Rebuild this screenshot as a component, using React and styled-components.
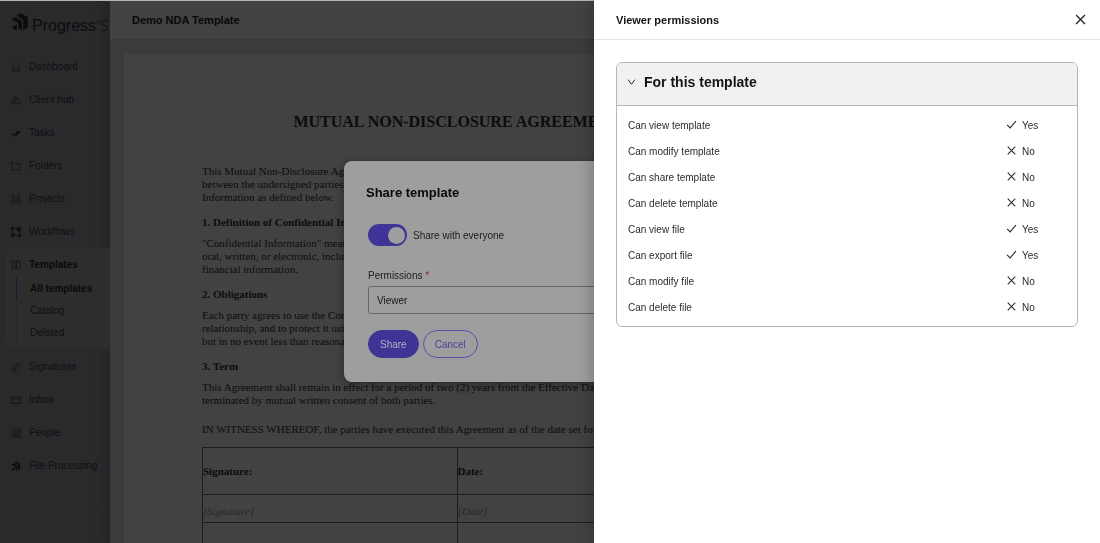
import { useState } from "react";
import styled, { createGlobalStyle } from "styled-components";

const GlobalStyle = createGlobalStyle`
  * {
    box-sizing: border-box;
  }
  body {
    margin: 0;
    overflow: hidden;
    font-family: "Liberation Sans", Arial, sans-serif;
    font-size: 10px;
    line-height: 14px;
    color: #2c2c2c;
  }
  h1, h2, h3, p, ul {
    margin: 0;
    padding: 0;
  }
  button, select, input {
    font-family: inherit;
  }
`;

const Page = styled.div`
  display: flex;
  height: 100vh;
  border-top: 1px solid #b4b8b7;
  background: #424242;
`;
const Sidebar = styled.nav`
  flex: 0 0 110px;
  overflow: hidden;
  background: linear-gradient(90deg, #2a2a2c 85%, #252527 100%);
`;
const Logo = styled.a`
  display: flex;
  gap: 3px;
  height: 49px;
  padding: 12px 0 0 11px;
  color: #0c0c0d;
  font-size: 16px;
  line-height: 23px;
  text-decoration: none;
  white-space: nowrap;

  svg {
    flex: none;
  }
`;
const LogoMark = styled.span`
  font-size: 5px;
  vertical-align: 6px;
  line-height: 5px;
`;
const LogoLight = styled.span`
  font-family: Lato, sans-serif;
  font-weight: 300;
`;
const NavList = styled.ul`
  list-style: none;
`;
const NavItem = styled.li`
  margin-left: ${({ $open }) => ($open ? "6px" : "0")};
  padding-left: ${({ $open }) => ($open ? "5px" : "11px")};
  padding-bottom: ${({ $open }) => ($open ? "5px" : "0")};
  margin-bottom: ${({ $open }) => ($open ? "1px" : "0")};
  border-radius: 6px 0 0 6px;
  background: ${({ $open }) => ($open ? "#2d2d2d" : "transparent")};
`;
const NavLink = styled.a`
  display: flex;
  align-items: center;
  gap: 8px;
  height: 33px;
  color: ${({ $active }) => ($active ? "#0a0a0a" : "#0f0f11")};
  font-weight: ${({ $active }) => ($active ? 700 : 400)};
  text-decoration: none;
  white-space: nowrap;
`;
const SubList = styled.ul`
  margin: -3px 0 0 5px;
  border-left: 1px solid #282829;
  list-style: none;
`;
const SubLink = styled.a`
  display: block;
  margin-left: -1px;
  padding-left: 13px;
  border-left: 1px solid ${({ $active }) => ($active ? "#191733" : "transparent")};
  color: ${({ $active }) => ($active ? "#0a0a0a" : "#0f0f11")};
  font-weight: ${({ $active }) => ($active ? 700 : 400)};
  line-height: 22px;
  text-decoration: none;
`;

const Main = styled.main`
  flex: 1;
  display: flex;
  flex-direction: column;
  min-width: 0;
  overflow: hidden;
`;
const TopBar = styled.header`
  flex: none;
  padding: 12px 22px;
  color: #080808;
`;
const TopTitle = styled.h1`
  font-size: 11px;
  font-weight: 700;
  line-height: 14px;
`;
const Workspace = styled.div`
  flex: 1;
  min-height: 0;
  padding: 15px 14px 0;
  overflow: hidden;
  background: #3b3b3b;
`;
const Sheet = styled.article`
  max-width: 666px;
  min-height: 100%;
  padding: 57px 78px;
  background: #424242;
  color: #0c0c0c;
  font-family: "Liberation Serif", serif;
  font-size: 11px;
  line-height: 13px;
  white-space: nowrap;
`;
const SheetTitle = styled.h2`
  margin-bottom: 32px;
  font-size: 16px;
  line-height: 22px;
  text-align: center;
`;
const Clause = styled.h3`
  padding: 12px 0 8px;
  font-size: 11px;
  line-height: 13px;
`;
const Witness = styled.p`
  margin: 16px 0 11px;
`;
const SignTable = styled.table`
  width: 100%;
  border-collapse: collapse;
  table-layout: fixed;
`;
const SignCell = styled.td`
  height: ${({ $blank }) => ($blank ? "28px" : "47px")};
  padding: ${({ $blank }) => ($blank ? "6px 0 0" : "0")};
  border: 1px solid #1c1c1c;
  color: ${({ $blank }) => ($blank ? "#282828" : "#0a0a0a")};
  font-style: ${({ $blank }) => ($blank ? "italic" : "normal")};
  font-weight: ${({ $blank }) => ($blank ? 400 : 700)};
`;

const Backdrop = styled.div`
  position: fixed;
  inset: 0;
  display: grid;
  place-items: center;
`;
const Modal = styled.form`
  width: 412px;
  padding: 24px;
  border-radius: 8px;
  background: #9e9e9e;
  color: #202020;
  box-shadow: 0 2px 8px rgba(0, 0, 0, 0.4);
`;
const ModalTitle = styled.h2`
  margin: 0 -2px 23px;
  color: #090909;
  font-size: 13px;
  font-weight: 700;
  line-height: 16px;
`;
const SwitchRow = styled.label`
  display: flex;
  align-items: center;
  gap: 6px;
  margin-bottom: 23px;
`;
const Switch = styled.input`
  appearance: none;
  display: flex;
  align-items: center;
  width: 39px;
  height: 22px;
  margin: 0;
  padding: 2px;
  border-radius: 11px;
  background: #3f3597;

  &::before {
    content: "";
    width: 17px;
    height: 17px;
    border-radius: 50%;
    background: #9e9e9e;
  }
  &:checked {
    justify-content: flex-end;
  }
`;
const SwitchText = styled.span`
  padding-top: 2px;
`;
const FieldLabel = styled.label`
  display: block;
  margin-bottom: 3px;
`;
const Required = styled.span`
  color: #9a2020;
`;
const Select = styled.select`
  appearance: none;
  display: block;
  width: 100%;
  height: 28px;
  margin-bottom: 16px;
  padding: 0 8px;
  border: 1px solid #666666;
  border-radius: 3px;
  background: transparent;
  color: #181818;
  font-size: 10px;
`;
const Actions = styled.div`
  display: flex;
  gap: 4px;
`;
const PillButton = styled.button`
  height: 28px;
  padding: 0 11px;
  border: 1px solid ${({ $primary }) => ($primary ? "#3f3597" : "#5a4fa8")};
  border-radius: 14px;
  background: ${({ $primary }) => ($primary ? "#3f3597" : "transparent")};
  color: ${({ $primary }) => ($primary ? "#b0aec0" : "#4a3fa0")};
  font-size: 10px;
`;

const Drawer = styled.aside`
  position: fixed;
  top: 0;
  right: 0;
  bottom: 0;
  width: 46%;
  background: #ffffff;
  box-shadow: 0 0 16px rgba(0, 0, 0, 0.3);
`;
const DrawerHead = styled.header`
  display: flex;
  align-items: center;
  justify-content: space-between;
  height: 40px;
  padding: 0 13px 0 22px;
  border-bottom: 1px solid #e4e6e6;
`;
const DrawerTitle = styled.h2`
  color: #141414;
  font-size: 11px;
  font-weight: 700;
`;
const IconButton = styled.button`
  display: flex;
  padding: 0;
  border: none;
  background: none;
  color: #222222;
`;
const Panel = styled.section`
  margin: 22px;
  border: 1px solid #b4b6b9;
  border-radius: 6px;
  overflow: hidden;
`;
const PanelHead = styled.button`
  display: flex;
  align-items: center;
  gap: 8px;
  width: 100%;
  height: 43px;
  padding: 0 10px 4px;
  border: none;
  border-bottom: 1px solid #b4b6b9;
  background: #f1f1f1;
  color: #141414;
  font-size: 14px;
  font-weight: 700;
`;
const PermissionTable = styled.table`
  width: 100%;
  margin: 6px 0;
  border-collapse: collapse;
`;
const PermissionName = styled.th`
  height: 26px;
  padding: 1px 0 0 11px;
  font-weight: 400;
  text-align: left;
`;
const PermissionValue = styled.td`
  width: 71px;
  padding: 1px 0 0;
`;
const Value = styled.span`
  display: flex;
  align-items: center;
  gap: 5px;

  svg {
    margin-bottom: 2px;
  }
`;

const Icon = ({ size = 10, weight = 1, children }) => (
  <svg
    width={size}
    height={size}
    viewBox="0 0 16 16"
    fill="none"
    stroke="currentColor"
    strokeWidth={weight}
    aria-hidden="true"
  >
    {children}
  </svg>
);

const ProgressMark = ({ size }) => (
  <svg width={size} height={size} viewBox="0 0 18 18" fill="currentColor" aria-hidden="true">
    <path d="M5.300 2.700L9.700.3l7 4v10.200L12.200 17V6.900z" />
    <path d="M.3 6.200L4.200 4l6.700 3.900v9L7.300 15v-5z" />
    <path d="M.5 14.800l5.300-3.200v5.900z" />
  </svg>
);

const icons = {
  home: <path d="M1 8l7-6.500L15 8M3 6.500V15h3.500v-4.500h3V15H13V6.500" />,
  clients: (
    <path d="M6 8.500a3 3 0 1 0 0-6 3 3 0 0 0 0 6zM1 14c0-5.500 10-5.500 10 0zM10 2.800a3 3 0 0 1 0 5.400M12 9.500c2 .5 3 2 3 4.500h-2" />
  ),
  tasks: <path d="M1.500 9l3 3L12 4.500M7.500 12l7.500-7" strokeWidth="2.200" />,
  folder: <path d="M1 2.500h5l2 2h7.500v9.500H1z" />,
  projects: (
    <path d="M4 6.500a2.500 2.500 0 1 0 0-5 2.500 2.500 0 0 0 0 5zM12 1.500L15 6.500H9zM1.500 9.500h5v5h-5zM9.500 9.500h5v5h-5z" />
  ),
  workflows: (
    <>
      <path d="M2 2h12v12H2z" />
      <path d="M1 1h3v3H1zM10 1h5v5h-5zM1 11h4v4H1zM12 12h3v3h-3z" fill="currentColor" />
    </>
  ),
  templates: <path d="M1.500 2h5v12h-5zM9 2h5.500v12H9z" />,
  signatures: <path d="M1 15h12M3 12l1.500-4L12 1.500 14.500 4 8 11zM9.500 3.500L12 6M3 12l4-4" />,
  inbox: <path d="M1 3h14v10.500H1zM1 3.500l7 5.500 7-5.500" />,
  people: (
    <path d="M2 1h11.500v14H2zM8 8a2 2 0 1 0 0-4 2 2 0 0 0 0 4zM4.500 12.500c0-4 7-4 7 0zM15 3v2M15 7v2" />
  ),
  chevron: <path d="M2 3l6 8 6-8" />,
  check: <path d="M1.500 8.500L6 13l8.500-10" />,
  cross: <path d="M2.500 2.500l11 11M13.500 2.500l-11 11" />,
};

const navItems = [
  { label: "Dashboard", icon: "home" },
  { label: "Client hub", icon: "clients" },
  { label: "Tasks", icon: "tasks" },
  { label: "Folders", icon: "folder" },
  { label: "Projects", icon: "projects" },
  { label: "Workflows", icon: "workflows" },
  { label: "Templates", icon: "templates", children: ["All templates", "Catalog", "Deleted"] },
  { label: "Signatures", icon: "signatures" },
  { label: "Inbox", icon: "inbox" },
  { label: "People", icon: "people" },
  { label: "File Processing" },
];

const permissions = [
  ["Can view template", true],
  ["Can modify template", false],
  ["Can share template", false],
  ["Can delete template", false],
  ["Can view file", true],
  ["Can export file", true],
  ["Can modify file", false],
  ["Can delete file", false],
];

const SideNav = () => (
  <Sidebar>
    <Logo href="#">
      <ProgressMark size={18} />
      <span>
        Progress<LogoMark>®</LogoMark>
        <LogoLight>S</LogoLight>
      </span>
    </Logo>
    <NavList>
      {navItems.map(({ label, icon, children }) => (
        <NavItem key={label} $open={!!children}>
          <NavLink href="#" $active={!!children}>
            {icon ? <Icon>{icons[icon]}</Icon> : <ProgressMark size={10} />}
            {label}
          </NavLink>
          {children && (
            <SubList>
              {children.map((child, i) => (
                <li key={child}>
                  <SubLink href="#" $active={i === 0}>
                    {child}
                  </SubLink>
                </li>
              ))}
            </SubList>
          )}
        </NavItem>
      ))}
    </NavList>
  </Sidebar>
);

const Agreement = () => (
  <Sheet>
    <SheetTitle>MUTUAL NON-DISCLOSURE AGREEMENT</SheetTitle>
    <p>
      This Mutual Non-Disclosure Agreement is entered into by and
      <br />
      between the undersigned parties for the purpose of protecting
      <br />
      Information as defined below.
    </p>
    <Clause>1. Definition of Confidential Information</Clause>
    <p>
      "Confidential Information" means any information disclosed,
      <br />
      oral, written, or electronic, including business, technical and
      <br />
      financial information.
    </p>
    <Clause>2. Obligations</Clause>
    <p>
      Each party agrees to use the Confidential Information only for the
      <br />
      relationship, and to protect it using the same degree of care,
      <br />
      but in no event less than reasonable care.
    </p>
    <Clause>3. Term</Clause>
    <p>
      This Agreement shall remain in effect for a period of two (2) years from the Effective Date or until
      <br />
      terminated by mutual written consent of both parties.
    </p>
    <Witness>
      IN WITNESS WHEREOF, the parties have executed this Agreement as of the date set forth below.
    </Witness>
    <SignTable>
      <tbody>
        <tr>
          <SignCell>Signature:</SignCell>
          <SignCell>Date:</SignCell>
        </tr>
        <tr>
          <SignCell $blank>[Signature]</SignCell>
          <SignCell $blank>[Date]</SignCell>
        </tr>
        <tr>
          <SignCell>Printed Name:</SignCell>
          <SignCell>Company Name:</SignCell>
        </tr>
      </tbody>
    </SignTable>
  </Sheet>
);

const ShareModal = () => {
  const [everyone, setEveryone] = useState(true);
  return (
    <Backdrop>
      <Modal>
        <ModalTitle>Share template</ModalTitle>
        <SwitchRow>
          <Switch
            type="checkbox"
            role="switch"
            checked={everyone}
            onChange={(e) => setEveryone(e.target.checked)}
          />
          <SwitchText>Share with everyone</SwitchText>
        </SwitchRow>
        <FieldLabel htmlFor="permissions">
          Permissions <Required>*</Required>
        </FieldLabel>
        <Select id="permissions" defaultValue="Viewer">
          <option>Viewer</option>
        </Select>
        <Actions>
          <PillButton type="button" $primary>
            Share
          </PillButton>
          <PillButton type="button">Cancel</PillButton>
        </Actions>
      </Modal>
    </Backdrop>
  );
};

const PermissionsDrawer = () => {
  const [open, setOpen] = useState(true);
  return (
    <Drawer>
      <DrawerHead>
        <DrawerTitle>Viewer permissions</DrawerTitle>
        <IconButton type="button" aria-label="Close">
          <Icon size={13} weight={1.6}>
            {icons.cross}
          </Icon>
        </IconButton>
      </DrawerHead>
      <Panel>
        <PanelHead type="button" aria-expanded={open} onClick={() => setOpen(!open)}>
          <Icon size={9} weight={1.6}>
            {icons.chevron}
          </Icon>
          For this template
        </PanelHead>
        {open && (
          <PermissionTable>
            <tbody>
              {permissions.map(([name, allowed]) => (
                <tr key={name}>
                  <PermissionName scope="row">{name}</PermissionName>
                  <PermissionValue>
                    <Value>
                      <Icon size={11} weight={1.6}>
                        {allowed ? icons.check : icons.cross}
                      </Icon>
                      {allowed ? "Yes" : "No"}
                    </Value>
                  </PermissionValue>
                </tr>
              ))}
            </tbody>
          </PermissionTable>
        )}
      </Panel>
    </Drawer>
  );
};

const App = () => (
  <>
    <GlobalStyle />
    <Page>
      <SideNav />
      <Main>
        <TopBar>
          <TopTitle>Demo NDA Template</TopTitle>
        </TopBar>
        <Workspace>
          <Agreement />
        </Workspace>
      </Main>
    </Page>
    <ShareModal />
    <PermissionsDrawer />
  </>
);

export default App;
